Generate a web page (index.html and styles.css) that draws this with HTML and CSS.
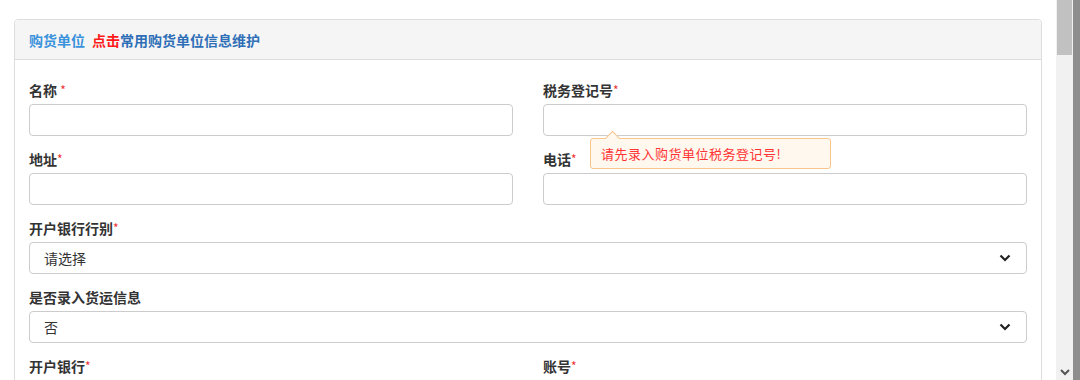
FILE: index.html
```html
<!DOCTYPE html>
<html lang="zh-CN">
<head>
    <meta charset="UTF-8">
    <title>购货单位</title>
    <link rel="stylesheet" href="styles.css">
</head>
<body>
    <div class="page">
        <div class="panel">
            <div class="panel-heading">
                <span class="title">购货单位</span>
                <a href="#" class="maintain"><span class="hot">点击</span>常用购货单位信息维护</a>
            </div>
            <div class="panel-body">
                <div class="row">
                    <div class="form-group">
                        <label>名称 <i class="req">*</i></label>
                        <input type="text" class="form-control">
                    </div>
                    <div class="form-group tip-anchor">
                        <label>税务登记号<i class="req">*</i></label>
                        <input type="text" class="form-control">
                        <div class="tip">请先录入购货单位税务登记号!</div>
                    </div>
                </div>
                <div class="row">
                    <div class="form-group">
                        <label>地址<i class="req">*</i></label>
                        <input type="text" class="form-control">
                    </div>
                    <div class="form-group">
                        <label>电话<i class="req">*</i></label>
                        <input type="text" class="form-control">
                    </div>
                </div>
                <div class="form-group">
                    <label>开户银行行别<i class="req">*</i></label>
                    <div class="select">
                        <span>请选择</span>
                        <svg width="12" height="8" viewBox="0 0 12 8"><path d="M1.5 1.5 6 6l4.5-4.5" fill="none" stroke="#222" stroke-width="2.2"/></svg>
                    </div>
                </div>
                <div class="form-group">
                    <label>是否录入货运信息</label>
                    <div class="select">
                        <span>否</span>
                        <svg width="12" height="8" viewBox="0 0 12 8"><path d="M1.5 1.5 6 6l4.5-4.5" fill="none" stroke="#222" stroke-width="2.2"/></svg>
                    </div>
                </div>
                <div class="row">
                    <div class="form-group">
                        <label>开户银行<i class="req">*</i></label>
                        <input type="text" class="form-control">
                    </div>
                    <div class="form-group">
                        <label>账号<i class="req">*</i></label>
                        <input type="text" class="form-control">
                    </div>
                </div>
            </div>
        </div>
    </div>
    <div class="scrollbar">
        <div class="thumb"></div>
        <div class="track"></div>
        <svg class="arrow" width="10" height="7" viewBox="0 0 10 7"><path d="M1 1l4 4 4-4" fill="none" stroke="#555" stroke-width="2"/></svg>
    </div>
    <div class="edge"></div>
</body>
</html>
```
FILE: styles.css
```css
* {
    margin: 0;
    padding: 0;
    box-sizing: border-box;
    font-family: "Noto Sans CJK SC", "Liberation Sans", sans-serif;
}
body {
    background-color: #fff;
    display: flex;
    height: 380px;
    overflow: hidden;
    font-size: 14px;
    color: #333;
}
.page {
    width: 1056px;
    padding: 19px 14px 0 14px;
}
.panel {
    border: 1px solid #ddd;
    border-radius: 4px;
    background-color: #fff;
}
.panel-heading {
    height: 40px;
    display: flex;
    align-items: center;
    padding: 0 14px;
    background-color: #f5f5f5;
    border-bottom: 1px solid #ddd;
    border-radius: 4px 4px 0 0;
    font-weight: bold;
}
.title {
    color: #3a92dc;
    margin-right: 7px;
}
.maintain {
    color: #2e6fb7;
    text-decoration: none;
}
.hot {
    color: #ff1a1a;
}
.panel-body {
    padding: 20px 14px 0 14px;
}
.row {
    display: grid;
    grid-template-columns: 1fr 1fr;
    gap: 30px;
}
.form-group {
    margin-bottom: 13px;
}
.form-group label {
    display: block;
    line-height: 20px;
    margin-bottom: 4px;
    font-weight: bold;
    color: #333;
}
.req {
    color: #e33;
    font-style: normal;
    font-weight: normal;
    font-size: 12px;
    vertical-align: top;
}
.form-control {
    display: block;
    width: 100%;
    height: 32px;
    border: 1px solid #ccc;
    border-radius: 4px;
    background-color: #fff;
    outline: none;
}
.select {
    height: 32px;
    border: 1px solid #ccc;
    border-radius: 4px;
    display: flex;
    align-items: center;
    justify-content: space-between;
    padding: 0 15px 0 14px;
    color: #333;
}
.tip-anchor {
    position: relative;
}
.tip {
    position: absolute;
    left: 47px;
    top: 58px;
    width: 241px;
    height: 31px;
    line-height: 29px;
    padding: 0 10px;
    background-color: #fff8ee;
    border: 1px solid #f7c589;
    border-radius: 3px;
    color: #f33;
    font-size: 13px;
    letter-spacing: 0.5px;
    white-space: nowrap;
    z-index: 10;
}
.tip::before {
    content: "";
    position: absolute;
    left: 16px;
    top: -6px;
    width: 10px;
    height: 10px;
    background-color: #fff8ee;
    border-top: 1px solid #f7c589;
    border-left: 1px solid #f7c589;
    transform: rotate(45deg);
}
.scrollbar {
    width: 17px;
    background-color: #f1f1f1;
    display: flex;
    flex-direction: column;
    align-items: center;
}
.thumb {
    width: 15px;
    height: 55px;
    background-color: #c1c1c1;
}
.track {
    flex: 1;
}
.arrow {
    margin-bottom: 4px;
}
.edge {
    width: 7px;
    background-color: #8e8e8e;
}
```
